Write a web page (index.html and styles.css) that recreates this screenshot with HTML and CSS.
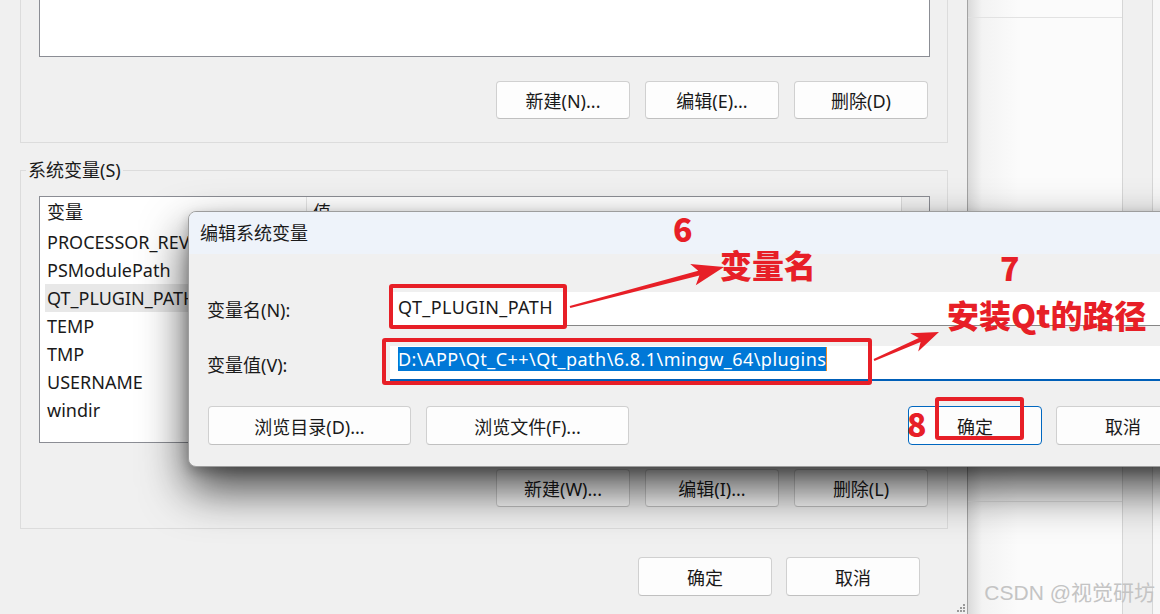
FILE: index.html
```html
<!DOCTYPE html>
<html lang="zh-CN">
<head>
  <meta charset="UTF-8" />
  <meta name="viewport" content="width=device-width, initial-scale=1.0" />
  <title>编辑系统变量</title>
  <link rel="stylesheet" href="styles.css">
</head>
<body>
  <div class="desktop">
    <div class="env-window">
      <div class="group user-group">
        <div class="listbox user-list"></div>
        <div class="btn-row">
          <button class="btn">新建(N)...</button>
          <button class="btn">编辑(E)...</button>
          <button class="btn">删除(D)</button>
        </div>
      </div>

      <fieldset class="group sys-group">
        <legend>系统变量(S)</legend>
        <div class="listbox sys-list">
          <div class="list-head">
            <div class="col-name">变量</div>
            <div class="col-value">值</div>
            <div class="col-end"></div>
          </div>
          <div class="list-rows">
            <div class="row">PROCESSOR_REVISION</div>
            <div class="row">PSModulePath</div>
            <div class="row selected">QT_PLUGIN_PATH</div>
            <div class="row">TEMP</div>
            <div class="row">TMP</div>
            <div class="row">USERNAME</div>
            <div class="row">windir</div>
          </div>
        </div>
        <div class="btn-row">
          <button class="btn">新建(W)...</button>
          <button class="btn">编辑(I)...</button>
          <button class="btn">删除(L)</button>
        </div>
      </fieldset>

      <div class="footer-row">
        <button class="btn tall">确定</button>
        <button class="btn tall">取消</button>
      </div>

      <svg class="grip" width="8" height="8" viewBox="0 0 8 8">
        <rect x="6" y="0" width="2" height="2" fill="#9a9a9a"/>
        <rect x="3" y="3" width="2" height="2" fill="#9a9a9a"/>
        <rect x="6" y="3" width="2" height="2" fill="#9a9a9a"/>
        <rect x="0" y="6" width="2" height="2" fill="#9a9a9a"/>
        <rect x="3" y="6" width="2" height="2" fill="#9a9a9a"/>
        <rect x="6" y="6" width="2" height="2" fill="#9a9a9a"/>
      </svg>
    </div>

    <div class="side-panel">
      <div class="side-col">
        <div class="side-head"></div>
        <div class="side-body"></div>
      </div>
      <div class="side-strip"></div>
    </div>
  </div>

  <div class="dialog">
    <div class="dialog-title">编辑系统变量</div>
    <div class="dialog-body">
      <div class="field-grid">
        <label class="field-label">变量名(N):</label>
        <div class="input">QT_PLUGIN_PATH</div>
        <label class="field-label">变量值(V):</label>
        <div class="input focused"><span class="sel">D:\APP\Qt_C++\Qt_path\6.8.1\mingw_64\plugins</span><span class="caret"></span></div>
      </div>
      <div class="dialog-buttons">
        <button class="btn wide">浏览目录(D)...</button>
        <button class="btn wide">浏览文件(F)...</button>
        <div class="spacer"></div>
        <button class="btn tall default">确定</button>
        <button class="btn tall">取消</button>
      </div>
    </div>
  </div>

  <!-- red annotations drawn on top of the screenshot -->
  <div class="mark-box box-name"></div>
  <div class="mark-box box-value"></div>
  <div class="mark-box box-ok"></div>

  <div class="mark-text num-6">6</div>
  <div class="mark-text tip-name">变量名</div>
  <div class="mark-text num-7">7</div>
  <div class="mark-text tip-path">安装Qt的路径</div>
  <div class="mark-text num-8">8</div>

  <svg class="arrows" width="1160" height="614" viewBox="0 0 1160 614">
    <polygon fill="#e71f27" points="570.3,308 699.4,275.5 695.8,285.2 724,267 690.2,264 698.2,270.7 569.7,306"/>
    <polygon fill="#e71f27" points="874.4,360.9 920.6,342 918.2,351.6 939,332 910.2,333.2 918.8,338 873.6,359.1"/>
  </svg>

  <div class="watermark">CSDN @视觉研坊</div>
</body>
</html>
```

FILE: styles.css
```css
* {
  box-sizing: border-box;
}
body {
  margin: 0;
  width: 1160px;
  height: 614px;
  overflow: hidden;
  position: relative;
  background: #f0f0f0;
  font-family: "Noto Sans", "Noto Sans CJK SC", sans-serif;
  font-size: 18px;
  color: #1a1a1a;
}
.desktop {
  display: flex;
  height: 614px;
}
.env-window {
  position: relative;
  flex: none;
  width: 968px;
  background: #f0f0f0;
  border-right: 1px solid #a3a3a3;
}
.group {
  margin: 0 0 0 20px;
  width: 928px;
  border: 1px solid #dcdcdc;
}
.user-group {
  border-top: none;
  padding: 0 17px 23px 18px;
}
.listbox {
  background: #fff;
  border: 1px solid #8b8d94;
}
.user-list {
  height: 57px;
  border-top: none;
}
.btn-row {
  display: flex;
  justify-content: flex-end;
  gap: 15px;
  margin-top: 24px;
  padding-right: 2px;
}
.btn {
  font: inherit;
  color: #1a1a1a;
  width: 134px;
  height: 38px;
  padding: 0;
  background: #fdfdfd;
  border: 1px solid #d0d0d0;
  border-bottom-color: #c0c0c0;
  border-radius: 4px;
}
.btn.tall {
  height: 39px;
}
.btn.wide {
  width: 203px;
  height: 39px;
}
.btn.default {
  border: 1px solid #0067c0;
}
.sys-group {
  margin-top: 15px;
  padding: 14px 17px 21px 18px;
  min-width: 0;
}
.sys-group legend {
  margin-left: -13px;
  padding: 0 2px;
  line-height: 24px;
}
.sys-list {
  height: 247px;
  overflow: hidden;
}
.sys-group .btn-row {
  margin-top: 26px;
}
.list-head {
  display: flex;
  height: 31px;
  line-height: 31px;
}
.col-name {
  width: 266px;
  padding-left: 7px;
}
.col-value {
  flex: 1;
  padding-left: 6px;
  border-left: 1px solid #e5e5e5;
}
.col-end {
  width: 28px;
  background: #f3f3f3;
  border-left: 1px solid #dcdcdc;
  border-bottom: 1px solid #dcdcdc;
}
.list-rows {
  padding-left: 5px;
}
.row {
  height: 28px;
  line-height: 28px;
  padding-left: 2px;
  white-space: nowrap;
  overflow: hidden;
}
.row.selected {
  background: #e8e8e8;
}
.footer-row {
  display: flex;
  justify-content: flex-end;
  gap: 14px;
  margin-top: 28px;
  padding-right: 47px;
}
.grip {
  position: absolute;
  right: 2px;
  bottom: 2px;
}
.side-panel {
  flex: 1;
  display: flex;
  background: #f7f7f7;
}
.side-col {
  width: 155px;
  border-right: 1px solid #d6d6d6;
  background: linear-gradient(to right, #dadada, #f3f3f3 14px, #fbfbfb 50px);
}
.side-head {
  height: 18px;
  border-bottom: 1px solid #e2e2e2;
}
.side-body {
  height: 484px;
  border-bottom: 1px solid #e2e2e2;
}
.side-strip {
  width: 30px;
  background: #f0f0f0;
  border-right: 1px solid #d6d6d6;
}

/* edit dialog */
.dialog {
  position: absolute;
  left: 188px;
  top: 211px;
  width: 1022px;
  background: #f0f0f0;
  border: 1px solid #9d9d9d;
  border-radius: 8px;
  overflow: hidden;
  box-shadow: 0 22px 46px rgba(0, 0, 0, 0.72), 0 5px 12px rgba(0, 0, 0, 0.22);
}
.dialog-title {
  height: 42px;
  line-height: 42px;
  padding-left: 11px;
  background: #eef3fa;
}
.dialog-body {
  padding: 38px 19px 21px 18px;
}
.field-grid {
  display: grid;
  grid-template-columns: 183px 1fr;
  row-gap: 20px;
}
.field-label {
  display: flex;
  align-items: center;
}
.input {
  height: 34px;
  line-height: 30px;
  padding-left: 8px;
  background: #fff;
  border-bottom: 1px solid #868686;
  white-space: nowrap;
  letter-spacing: 0.4px;
}
.input.focused {
  height: 35px;
  padding-top: 1px;
  line-height: 24px;
  border-bottom: 2px solid #005fb8;
  letter-spacing: 0.45px;
}
.sel {
  display: inline-block;
  vertical-align: top;
  background: #0078d7;
  color: #fff;
}
.caret {
  display: inline-block;
  vertical-align: top;
  width: 1px;
  height: 24px;
  background: #f08a24;
}
.dialog-buttons {
  display: flex;
  gap: 15px;
  margin-top: 25px;
  padding-left: 1px;
}
.spacer {
  flex: 1;
}
.dialog-buttons .default {
  margin-right: -1px;
}

/* annotations */
.mark-box {
  position: absolute;
  border: 4px solid #e71f27;
  border-radius: 3px;
}
.box-name {
  left: 389px;
  top: 284px;
  width: 178px;
  height: 45px;
}
.box-value {
  left: 382px;
  top: 338px;
  width: 490px;
  height: 47px;
}
.box-ok {
  left: 935px;
  top: 397px;
  width: 89px;
  height: 43px;
}
.mark-text {
  position: absolute;
  color: #e71f27;
  font-family: "Noto Sans CJK SC", sans-serif;
  font-weight: 900;
  font-size: 32px;
  line-height: 1;
  white-space: nowrap;
}
.num-6 {
  left: 673px;
  top: 212px;
}
.tip-name {
  left: 720px;
  top: 248px;
}
.num-7 {
  left: 1000px;
  top: 251px;
}
.tip-path {
  left: 947px;
  top: 298px;
}
.num-8 {
  left: 907px;
  top: 407px;
}
.arrows {
  position: absolute;
  left: 0;
  top: 0;
  pointer-events: none;
}
.watermark {
  position: absolute;
  right: 5px;
  top: 580px;
  font-family: "Liberation Sans", "Noto Sans CJK SC", sans-serif;
  font-size: 21px;
  line-height: 1.2;
  color: #c4c4c4;
}
```
